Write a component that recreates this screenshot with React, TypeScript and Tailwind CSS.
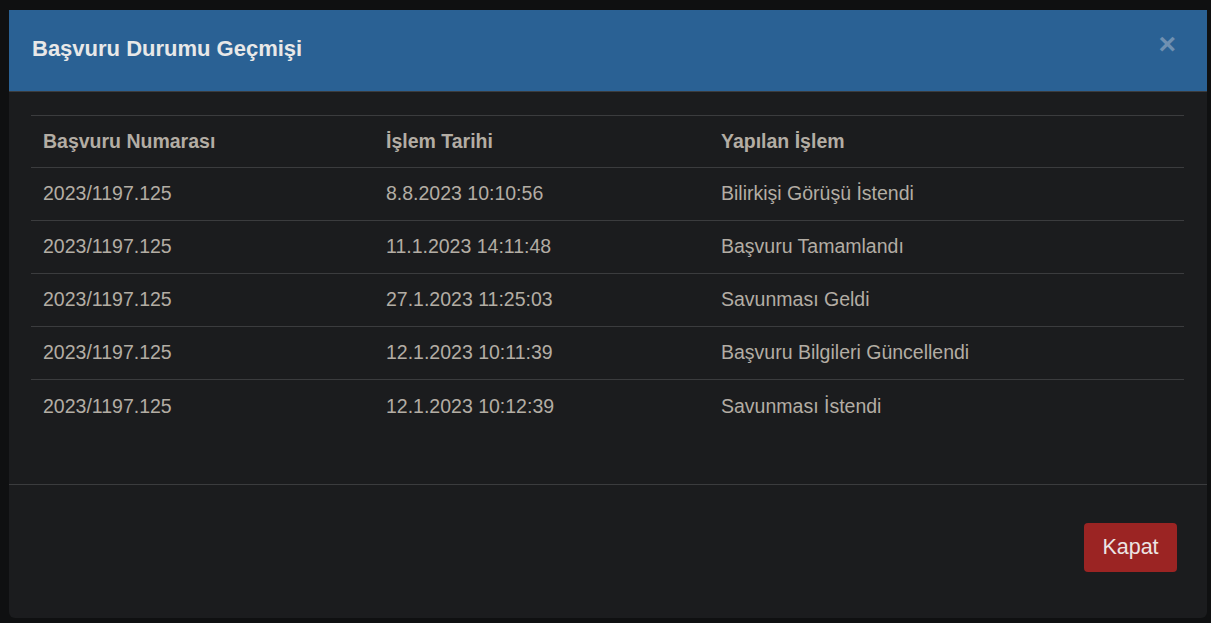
const rows = [
  { no: '2023/1197.125', date: '8.8.2023 10:10:56', action: 'Bilirkişi Görüşü İstendi' },
  { no: '2023/1197.125', date: '11.1.2023 14:11:48', action: 'Başvuru Tamamlandı' },
  { no: '2023/1197.125', date: '27.1.2023 11:25:03', action: 'Savunması Geldi' },
  { no: '2023/1197.125', date: '12.1.2023 10:11:39', action: 'Başvuru Bilgileri Güncellendi' },
  { no: '2023/1197.125', date: '12.1.2023 10:12:39', action: 'Savunması İstendi' },
];

export default function App() {
  return (
    <div className="w-[1211px] h-[623px] bg-[#0f1011] pt-[10px] pl-[9px] overflow-hidden" style={{ fontFamily: '"Liberation Sans", Arial, sans-serif' }}>
      {/* modal */}
      <div className="w-[1198px] h-[608px] bg-[#1b1c1e] rounded-b-[6px] flex flex-col overflow-hidden">
        {/* header */}
        <div className="h-[82px] bg-[#2a6194] border-b border-[#3b3c3e] flex items-center justify-between pl-[23px] pr-[31px] shrink-0">
          <h4 className="text-[22px] font-bold text-[#e8e8e8] leading-none -mt-[4px]">Başvuru Durumu Geçmişi</h4>
          <span className="text-[30px] font-bold text-[#6f90b1] leading-none -mt-[14px]">×</span>
        </div>

        {/* body */}
        <div className="pt-[23px] px-[22px] h-[393px] border-b border-[#3b3c3e] shrink-0">
          <table className="w-[1153px] text-[19.5px] text-[#b3ada4] border-collapse">
            <thead>
              <tr className="border-t border-b border-[#3b3c3e] text-left">
                <th className="w-[343px] h-[52px] px-[12px] font-bold">Başvuru Numarası</th>
                <th className="w-[335px] px-[12px] font-bold">İşlem Tarihi</th>
                <th className="px-[12px] font-bold">Yapılan İşlem</th>
              </tr>
            </thead>
            <tbody>
              {rows.map((r, i) => (
                <tr key={i} className={i < rows.length - 1 ? 'border-b border-[#3b3c3e]' : ''}>
                  <td className="h-[53px] px-[12px]">{r.no}</td>
                  <td className="px-[12px]">{r.date}</td>
                  <td className="px-[12px]">{r.action}</td>
                </tr>
              ))}
            </tbody>
          </table>
        </div>

        {/* footer */}
        <div className="flex-1 flex items-start justify-end pt-[38px] pr-[30px]">
          <button className="w-[93px] h-[49px] rounded-[4px] bg-[#9b2423] text-[#ece4e4] text-[21.5px]">Kapat</button>
        </div>
      </div>
    </div>
  );
}
